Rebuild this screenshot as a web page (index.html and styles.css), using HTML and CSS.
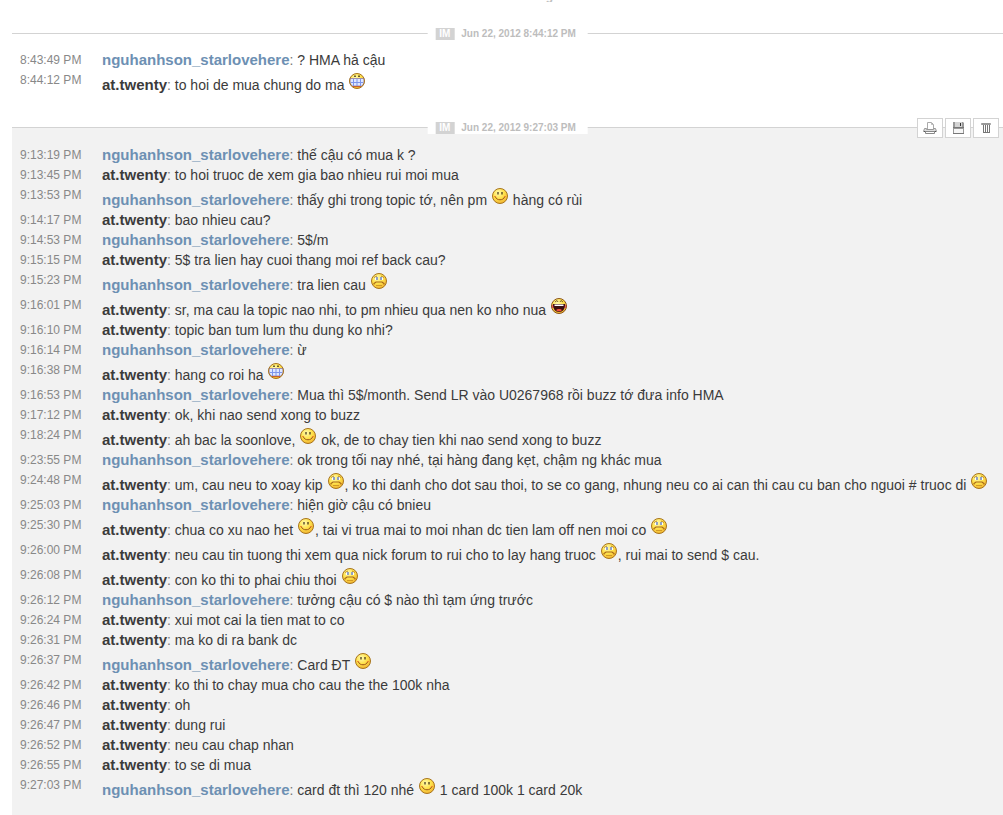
FILE: index.html
```html
<!DOCTYPE html>
<html lang="vi">
<head>
    <meta charset="UTF-8">
    <meta name="viewport" content="width=device-width, initial-scale=1.0">
    <title>Conversation</title>
    <link rel="stylesheet" href="styles.css">
</head>
<body>
    <!-- Smileys -->
    <svg class="sprites" aria-hidden="true">
        <defs>
            <radialGradient id="skin" cx="0.4" cy="0.3" r="0.75">
                <stop offset="0" stop-color="#fffbb0"/>
                <stop offset="0.5" stop-color="#ffe14a"/>
                <stop offset="1" stop-color="#f0b030"/>
            </radialGradient>
            <symbol id="happy" viewBox="0 0 18 18">
                <circle cx="9" cy="9" r="7.5" fill="url(#skin)" stroke="#a8741c"/>
                <path d="M7 5v2.500M11 5v2.500" stroke="#3a2a10" stroke-width="1.2"/>
                <path d="M4.500 10c1 3.700 8 3.700 9 0" fill="none" stroke="#9c5418"/>
                <path d="M3 9.500h2M13 9.500h2" stroke="#f08a30"/>
            </symbol>
            <symbol id="sad" viewBox="0 0 18 18">
                <circle cx="9" cy="9" r="7.5" fill="url(#skin)" stroke="#a8741c"/>
                <path d="M5 5h3v3H5zM10 5h3v3h-3z" fill="#fff"/>
                <path d="M7 5v3M11 5v3" stroke="#48649c" stroke-width="1.2"/>
                <path d="M4 5.500l3-1.500M14 5.500l-3-1.500" stroke="#a8741c" stroke-width="0.8"/>
                <path d="M4 12.500v-1l2-1.500h6l2 1.500v1" fill="none" stroke="#a86818" stroke-width="1.2"/>
                <path d="M6 13.500h6" stroke="#c88c20" stroke-width="0.8"/>
            </symbol>
            <symbol id="grin" viewBox="0 0 18 18">
                <circle cx="9" cy="9" r="7.5" fill="url(#skin)"/>
                <path d="M7 3.500v1.500M11 3.500v1.500" stroke="#2a2010" stroke-width="1.4"/>
                <path d="M2 6.500h14v4.500l-2 3H4l-2-3z" fill="#dfe8ff" stroke="#8c78a8" stroke-width="0.8"/>
                <path d="M3 10.500h12M5.500 7v7M9 7v7M12.500 7v7" stroke="#7d96ec"/>
                <path d="M5 14.500h8" stroke="#c86030"/>
                <circle cx="9" cy="9" r="7.5" fill="none" stroke="#a8741c"/>
            </symbol>
            <symbol id="laugh" viewBox="0 0 18 18">
                <circle cx="9" cy="9" r="7.5" fill="url(#skin)"/>
                <path d="M5 5l2-1.500 1 1.500M10 5l1-1.500 2 1.500" fill="none" stroke="#5a3c10" stroke-width="0.8"/>
                <path d="M1.500 8h3v3h-3zM13.500 8h3v3h-3z" fill="#f86060"/>
                <path d="M3 7h12c0 5-2 8-6 8s-6-3-6-8z" fill="#3c1010"/>
                <path d="M4.500 7.500h9v1.500h-9z" fill="#fff"/>
                <path d="M6 13c1-1.500 5-1.500 6 0-1 1.700-5 1.700-6 0z" fill="#f05040"/>
                <circle cx="9" cy="9" r="7.5" fill="none" stroke="#8c5418"/>
            </symbol>
        </defs>
    </svg>

    <main class="history">
        <div class="cutoff">g</div>

        <section class="session">
            <h2 class="stamp"><span class="kind">IM</span>Jun 22, 2012 8:44:12 PM</h2>
            <ul class="messages">
                <li><time>8:43:49 PM</time><p><b class="them">nguhanhson_starlovehere</b><i>:</i> ? HMA hả cậu</p></li>
                <li><time>8:44:12 PM</time><p><b>at.twenty</b><i>:</i> to hoi de mua chung do ma <svg class="smiley"><use href="#grin"/></svg></p></li>
            </ul>
        </section>

        <section class="session selected">
            <h2 class="stamp"><span class="kind">IM</span>Jun 22, 2012 9:27:03 PM</h2>
            <div class="tools">
                <button type="button" aria-label="Print">
                    <svg width="14" height="14" viewBox="0 0 14 14">
                        <path d="M4.500 8.500v-7h4l2 2v5" fill="#fff" stroke="#aaa"/>
                        <path d="M8.500 1.500v2h2" fill="none" stroke="#bbb"/>
                        <path d="M1.500 7.500h2v1h7v-1h2l1 3H.500z" fill="#ddd" stroke="#999"/>
                        <path d="M1 10.500h12" stroke="#555"/>
                        <path d="M2.500 10.500h9v2h-9z" fill="#fff" stroke="#888"/>
                    </svg>
                </button>
                <button type="button" aria-label="Save">
                    <svg width="14" height="14" viewBox="0 0 14 14">
                        <path d="M2 1h10l1 1v11H2z" fill="#999"/>
                        <path d="M4 1h7v5H4z" fill="#d4d4d4"/>
                        <path d="M9 2h1v3H9z" fill="#333"/>
                        <path d="M3 8h9v4H3z" fill="#f6f6f6"/>
                        <path d="M2 12.500h11M2 6.500h11" stroke="#777"/>
                    </svg>
                </button>
                <button type="button" aria-label="Delete">
                    <svg width="14" height="14" viewBox="0 0 14 14">
                        <path d="M2.500 2.500h9v1h-9z" fill="#ccc" stroke="#999"/>
                        <path d="M4.500 4v8M6.500 4v8M8.500 4v8M10.500 4v8M4 11.500h7" stroke="#777"/>
                    </svg>
                </button>
            </div>
            <ul class="messages">
                <li><time>9:13:19 PM</time><p><b class="them">nguhanhson_starlovehere</b><i>:</i> thế cậu có mua k ?</p></li>
                <li><time>9:13:45 PM</time><p><b>at.twenty</b><i>:</i> to hoi truoc de xem gia bao nhieu rui moi mua</p></li>
                <li><time>9:13:53 PM</time><p><b class="them">nguhanhson_starlovehere</b><i>:</i> thấy ghi trong topic tớ, nên pm <svg class="smiley"><use href="#happy"/></svg> hàng có rùi</p></li>
                <li><time>9:14:17 PM</time><p><b>at.twenty</b><i>:</i> bao nhieu cau?</p></li>
                <li><time>9:14:53 PM</time><p><b class="them">nguhanhson_starlovehere</b><i>:</i> 5$/m</p></li>
                <li><time>9:15:15 PM</time><p><b>at.twenty</b><i>:</i> 5$ tra lien hay cuoi thang moi ref back cau?</p></li>
                <li><time>9:15:23 PM</time><p><b class="them">nguhanhson_starlovehere</b><i>:</i> tra lien cau <svg class="smiley"><use href="#sad"/></svg></p></li>
                <li><time>9:16:01 PM</time><p><b>at.twenty</b><i>:</i> sr, ma cau la topic nao nhi, to pm nhieu qua nen ko nho nua <svg class="smiley"><use href="#laugh"/></svg></p></li>
                <li><time>9:16:10 PM</time><p><b>at.twenty</b><i>:</i> topic ban tum lum thu dung ko nhi?</p></li>
                <li><time>9:16:14 PM</time><p><b class="them">nguhanhson_starlovehere</b><i>:</i> ừ</p></li>
                <li><time>9:16:38 PM</time><p><b>at.twenty</b><i>:</i> hang co roi ha <svg class="smiley"><use href="#grin"/></svg></p></li>
                <li><time>9:16:53 PM</time><p><b class="them">nguhanhson_starlovehere</b><i>:</i> Mua thì 5$/month. Send LR vào U0267968 rồi buzz tớ đưa info HMA</p></li>
                <li><time>9:17:12 PM</time><p><b>at.twenty</b><i>:</i> ok, khi nao send xong to buzz</p></li>
                <li><time>9:18:24 PM</time><p><b>at.twenty</b><i>:</i> ah bac la soonlove, <svg class="smiley"><use href="#happy"/></svg> ok, de to chay tien khi nao send xong to buzz</p></li>
                <li><time>9:23:55 PM</time><p><b class="them">nguhanhson_starlovehere</b><i>:</i> ok trong tối nay nhé, tại hàng đang kẹt, chậm ng khác mua</p></li>
                <li><time>9:24:48 PM</time><p><b>at.twenty</b><i>:</i> um, cau neu to xoay kip <svg class="smiley"><use href="#sad"/></svg>, ko thi danh cho dot sau thoi, to se co gang, nhung neu co ai can thi cau cu ban cho nguoi # truoc di <svg class="smiley"><use href="#sad"/></svg></p></li>
                <li><time>9:25:03 PM</time><p><b class="them">nguhanhson_starlovehere</b><i>:</i> hiện giờ cậu có bnieu</p></li>
                <li><time>9:25:30 PM</time><p><b>at.twenty</b><i>:</i> chua co xu nao het <svg class="smiley"><use href="#happy"/></svg>, tai vi trua mai to moi nhan dc tien lam off nen moi co <svg class="smiley"><use href="#sad"/></svg></p></li>
                <li><time>9:26:00 PM</time><p><b>at.twenty</b><i>:</i> neu cau tin tuong thi xem qua nick forum to rui cho to lay hang truoc <svg class="smiley"><use href="#sad"/></svg>, rui mai to send $ cau.</p></li>
                <li><time>9:26:08 PM</time><p><b>at.twenty</b><i>:</i> con ko thi to phai chiu thoi <svg class="smiley"><use href="#sad"/></svg></p></li>
                <li><time>9:26:12 PM</time><p><b class="them">nguhanhson_starlovehere</b><i>:</i> tưởng cậu có $ nào thì tạm ứng trước</p></li>
                <li><time>9:26:24 PM</time><p><b>at.twenty</b><i>:</i> xui mot cai la tien mat to co</p></li>
                <li><time>9:26:31 PM</time><p><b>at.twenty</b><i>:</i> ma ko di ra bank dc</p></li>
                <li><time>9:26:37 PM</time><p><b class="them">nguhanhson_starlovehere</b><i>:</i> Card ĐT <svg class="smiley"><use href="#happy"/></svg></p></li>
                <li><time>9:26:42 PM</time><p><b>at.twenty</b><i>:</i> ko thi to chay mua cho cau the the 100k nha</p></li>
                <li><time>9:26:46 PM</time><p><b>at.twenty</b><i>:</i> oh</p></li>
                <li><time>9:26:47 PM</time><p><b>at.twenty</b><i>:</i> dung rui</p></li>
                <li><time>9:26:52 PM</time><p><b>at.twenty</b><i>:</i> neu cau chap nhan</p></li>
                <li><time>9:26:55 PM</time><p><b>at.twenty</b><i>:</i> to se di mua</p></li>
                <li><time>9:27:03 PM</time><p><b class="them">nguhanhson_starlovehere</b><i>:</i> card đt thì 120 nhé <svg class="smiley"><use href="#happy"/></svg> 1 card 100k 1 card 20k</p></li>
            </ul>
        </section>
    </main>
</body>
</html>
```
FILE: styles.css
```css
body {
    margin: 0;
    font-family: "Liberation Sans", Arial, sans-serif;
    font-size: 14px;
    line-height: 20px;
    color: #3b3b3b;
    background-color: #fff;
}

.sprites {
    position: absolute;
    width: 0;
    height: 0;
}

.history {
    margin-left: 12px;
}

/* tail of the session scrolled off above */
.cutoff {
    display: flex;
    align-items: flex-end;
    justify-content: center;
    height: 2px;
    padding-left: 84px;
    margin-bottom: 31px;
    overflow: hidden;
    font-size: 12px;
    font-weight: bold;
    line-height: 12px;
    color: #c0c0c0;
}

.session {
    position: relative;
    border-top: 1px solid #d3d3d3;
    padding: 16px 0 32px;
}

.session.selected {
    padding: 17px 0 15px;
    background-color: #f2f2f2;
}

/* sits over the top border */
.stamp {
    position: absolute;
    top: -6px;
    left: 50%;
    transform: translateX(-50%);
    display: flex;
    gap: 7px;
    margin: 0;
    padding: 0 12px 0 8px;
    font-size: 10px;
    line-height: 12px;
    white-space: nowrap;
    color: #bdbdbd;
    background-color: #fff;
}

.kind {
    padding: 0 4px;
    color: #fff;
    background-color: #d3d3d3;
}

.tools {
    position: absolute;
    top: -10px;
    right: 4px;
    display: flex;
    gap: 2px;
}

.tools button {
    display: flex;
    align-items: center;
    justify-content: center;
    width: 26px;
    height: 20px;
    padding: 0;
    border: 1px solid #d3d3d3;
    background-color: #fff;
    cursor: pointer;
}

.messages {
    margin: 0;
    padding: 0 0 0 8px;
    list-style: none;
}

.messages li {
    display: flex;
}

.messages time {
    flex: none;
    width: 82px;
    font-size: 12px;
    color: #888;
}

.messages p {
    margin: 0;
}

.messages b {
    font-size: 15px;
    line-height: 18px;
}

.messages i {
    font-style: normal;
    color: #777;
}

.messages .them {
    color: #6d90b3;
}

.smiley {
    width: 18px;
    height: 18px;
    margin-top: 2px;
    vertical-align: baseline;
}
```
